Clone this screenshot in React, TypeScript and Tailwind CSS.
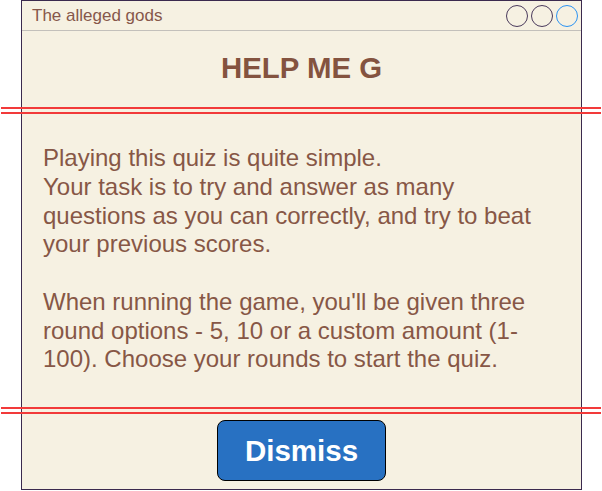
import React from "react";

export default function App() {
  const font = { fontFamily: '"Liberation Sans", Arial, sans-serif' };
  return (
    <div className="w-[602px] h-[491px] bg-white" style={font}>
      <div className="ml-[21px] w-[561px] h-[490px] border border-[#3b2a4e] bg-[#f6f1e2] flex flex-col">
        {/* title bar */}
        <div className="h-[30px] shrink-0 border-b border-[#c3c0bb] flex items-center justify-between pl-[10px] pr-[3px]">
          <span className="text-[17px] leading-none text-[#86574a]">The alleged gods</span>
          <div className="flex items-center gap-[3px]">
            <span className="block w-[22px] h-[22px] rounded-full border-[1.5px] border-[#4a3a5c]" />
            <span className="block w-[22px] h-[22px] rounded-full border-[1.5px] border-[#4a3a5c]" />
            <span className="block w-[22px] h-[22px] rounded-full border-[1.5px] border-[#2b93f2]" />
          </div>
        </div>
        {/* heading */}
        <div className="h-[76px] shrink-0 pt-[20px]">
          <h1 className="text-center text-[29.4px] leading-[33px] font-bold text-[#84533f]">HELP ME G</h1>
        </div>
        <div className="-ml-[21px] w-[600px] h-[7px] shrink-0 border-y-2 border-[#f23a3a]" />
        {/* body */}
        <div className="h-[293px] shrink-0 pt-[30px] pl-[21px] pr-[21px]">
          <p className="text-[24px] leading-[28.75px] text-[#875746]">
            Playing this quiz is quite simple.
            <br />
            Your task is to try and answer as many questions as you can correctly, and try to beat your previous scores.
            <br />
            <br />
            When running the game, you'll be given three round options - 5, 10 or a custom amount (1-100). Choose your rounds to start the quiz.
          </p>
        </div>
        <div className="-ml-[21px] w-[600px] h-[7px] shrink-0 border-y-2 border-[#f23a3a]" />
        {/* footer */}
        <div className="flex-1 flex justify-center pt-[6px]">
          <button className="w-[169px] h-[61px] rounded-[8px] border border-black bg-[#2871c2] text-white font-bold text-[29.5px] leading-none">
            Dismiss
          </button>
        </div>
      </div>
    </div>
  );
}
